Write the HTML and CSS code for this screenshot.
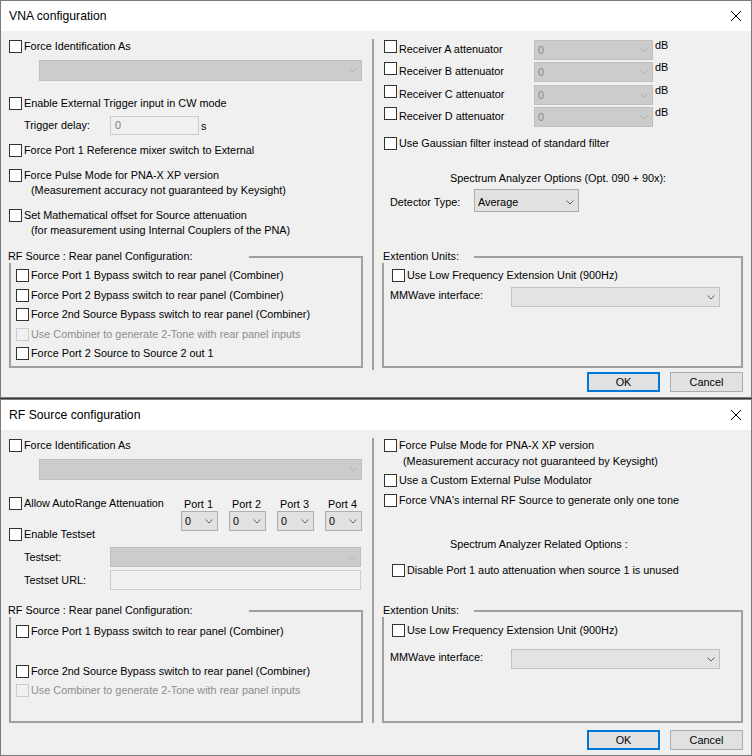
FILE: index.html
```html
<!DOCTYPE html>
<html>
<head>
<meta charset="utf-8">
<title>VNA configuration</title>
<link rel="stylesheet" href="styles.css">
</head>
<body>
<div class="win win1">
  <div class="titlebar">
    <span class="title">VNA configuration</span>
    <svg class="close" width="10" height="10" viewBox="0 0 10 10"><path d="M0 0 L10 10 M10 0 L0 10" stroke="#000" stroke-width="1" fill="none"/></svg>
  </div>
  <div class="wbody">
    <div class="lpanel lp1">
      <div class="cb mt1"><span class="box"></span>Force Identification As</div>
      <div class="combo dis wide mt7"><span class="ctext"></span><svg class="chev" width="8" height="5" viewBox="0 0 8 5"><path d="M0.5 0.5 L4 4 L7.5 0.5" fill="none" stroke="currentColor"/></svg></div>
      <div class="cb mt16"><span class="box"></span>Enable External Trigger input in CW mode</div>
      <div class="frow trig mt6"><span class="flabel">Trigger delay:</span><span class="tbox tdelay">0</span><span class="unit">s</span></div>
      <div class="cb mt9"><span class="box"></span>Force Port 1 Reference mixer switch to External</div>
      <div class="cb mt12"><span class="box"></span>Force Pulse Mode for PNA-X XP version</div>
      <div class="sub">(Measurement accuracy not guaranteed by Keysight)</div>
      <div class="cb mt12"><span class="box"></span>Set Mathematical offset for Source attenuation</div>
      <div class="sub">(for measurement using Internal Couplers of the PNA)</div>
      <div class="group lgroup mt13">
        <div class="ghead"><span class="glabel lglabel">RF Source : Rear panel Configuration:</span><span class="gline"></span></div>
        <div class="gbody lgbody gbh1">
          <div class="cb"><span class="box"></span>Force Port 1 Bypass switch to rear panel (Combiner)</div>
          <div class="cb mt7"><span class="box"></span>Force Port 2 Bypass switch to rear panel (Combiner)</div>
          <div class="cb mt6"><span class="box"></span>Force 2nd Source Bypass switch to rear panel (Combiner)</div>
          <div class="cb dis mt7"><span class="box"></span>Use Combiner to generate 2-Tone with rear panel inputs</div>
          <div class="cb mt6"><span class="box"></span>Force Port 2 Source to Source 2 out 1</div>
        </div>
      </div>
    </div>
    <div class="rcol">
      <div class="recv mt9"><div class="rcb"><span class="box"></span><span class="rtext">Receiver A attenuator</span></div><div class="combo dis rcombo"><span class="ctext">0</span><svg class="chev" width="8" height="5" viewBox="0 0 8 5"><path d="M0.5 0.5 L4 4 L7.5 0.5" fill="none" stroke="currentColor"/></svg></div><span class="db">dB</span></div>
      <div class="recv mt2"><div class="rcb"><span class="box"></span><span class="rtext">Receiver B attenuator</span></div><div class="combo dis rcombo"><span class="ctext">0</span><svg class="chev" width="8" height="5" viewBox="0 0 8 5"><path d="M0.5 0.5 L4 4 L7.5 0.5" fill="none" stroke="currentColor"/></svg></div><span class="db">dB</span></div>
      <div class="recv mt3"><div class="rcb"><span class="box"></span><span class="rtext">Receiver C attenuator</span></div><div class="combo dis rcombo"><span class="ctext">0</span><svg class="chev" width="8" height="5" viewBox="0 0 8 5"><path d="M0.5 0.5 L4 4 L7.5 0.5" fill="none" stroke="currentColor"/></svg></div><span class="db">dB</span></div>
      <div class="recv mt2"><div class="rcb"><span class="box"></span><span class="rtext">Receiver D attenuator</span></div><div class="combo dis rcombo"><span class="ctext">0</span><svg class="chev" width="8" height="5" viewBox="0 0 8 5"><path d="M0.5 0.5 L4 4 L7.5 0.5" fill="none" stroke="currentColor"/></svg></div><span class="db">dB</span></div>
      <div class="cb mt10"><span class="box"></span>Use Gaussian filter instead of standard filter</div>
      <div class="clabel mt22">Spectrum Analyzer Options (Opt. 090 + 90x):</div>
      <div class="det mt4"><span class="dlabel">Detector Type:</span><div class="combo dcombo"><span class="ctext">Average</span><svg class="chev" width="8" height="5" viewBox="0 0 8 5"><path d="M0.5 0.5 L4 4 L7.5 0.5" fill="none" stroke="currentColor"/></svg></div></div>
      <div class="group rgroup mt38">
        <div class="ghead"><span class="glabel rglabel">Extention Units:</span><span class="gline"></span></div>
        <div class="gbody rgbody gbh1">
          <div class="cb"><span class="box"></span>Use Low Frequency Extension Unit (900Hz)</div>
          <div class="mmrow mt5"><span class="mmlabel">MMWave interface:</span><div class="combo mmcombo"><span class="ctext"></span><svg class="chev" width="8" height="5" viewBox="0 0 8 5"><path d="M0.5 0.5 L4 4 L7.5 0.5" fill="none" stroke="currentColor"/></svg></div></div>
        </div>
      </div>
      <div class="buttons mt4"><div class="btn def">OK</div><div class="btn">Cancel</div></div>
    </div>
  </div>
</div>

<div class="win win2">
  <div class="titlebar">
    <span class="title">RF Source configuration</span>
    <svg class="close" width="10" height="10" viewBox="0 0 10 10"><path d="M0 0 L10 10 M10 0 L0 10" stroke="#000" stroke-width="1" fill="none"/></svg>
  </div>
  <div class="wbody">
    <div class="lpanel lp2">
      <div class="cb mt1"><span class="box"></span>Force Identification As</div>
      <div class="combo dis wide mt7"><span class="ctext"></span><svg class="chev" width="8" height="5" viewBox="0 0 8 5"><path d="M0.5 0.5 L4 4 L7.5 0.5" fill="none" stroke="currentColor"/></svg></div>
      <div class="pblock mt17">
        <div class="pleft">
          <div class="cb"><span class="box"></span>Allow AutoRange Attenuation</div>
          <div class="cb mt18"><span class="box"></span>Enable Testset</div>
        </div>
        <div class="ports">
          <div class="port"><span class="plabel">Port 1</span><div class="combo pcombo"><span class="ctext">0</span><svg class="chev" width="8" height="5" viewBox="0 0 8 5"><path d="M0.5 0.5 L4 4 L7.5 0.5" fill="none" stroke="currentColor"/></svg></div></div>
          <div class="port"><span class="plabel">Port 2</span><div class="combo pcombo"><span class="ctext">0</span><svg class="chev" width="8" height="5" viewBox="0 0 8 5"><path d="M0.5 0.5 L4 4 L7.5 0.5" fill="none" stroke="currentColor"/></svg></div></div>
          <div class="port"><span class="plabel">Port 3</span><div class="combo pcombo"><span class="ctext">0</span><svg class="chev" width="8" height="5" viewBox="0 0 8 5"><path d="M0.5 0.5 L4 4 L7.5 0.5" fill="none" stroke="currentColor"/></svg></div></div>
          <div class="port"><span class="plabel">Port 4</span><div class="combo pcombo"><span class="ctext">0</span><svg class="chev" width="8" height="5" viewBox="0 0 8 5"><path d="M0.5 0.5 L4 4 L7.5 0.5" fill="none" stroke="currentColor"/></svg></div></div>
        </div>
      </div>
      <div class="frow mt6"><span class="flabel">Testset:</span><div class="combo dis fcombo"><span class="ctext"></span><svg class="chev" width="8" height="5" viewBox="0 0 8 5"><path d="M0.5 0.5 L4 4 L7.5 0.5" fill="none" stroke="currentColor"/></svg></div></div>
      <div class="frow mt3"><span class="flabel">Testset URL:</span><span class="tbox furl"></span></div>
      <div class="group lgroup mt14">
        <div class="ghead"><span class="glabel lglabel">RF Source : Rear panel Configuration:</span><span class="gline"></span></div>
        <div class="gbody lgbody2 gbh2">
          <div class="cb"><span class="box"></span>Force Port 1 Bypass switch to rear panel (Combiner)</div>
          <div class="cb mt27"><span class="box"></span>Force 2nd Source Bypass switch to rear panel (Combiner)</div>
          <div class="cb dis mt6"><span class="box"></span>Use Combiner to generate 2-Tone with rear panel inputs</div>
        </div>
      </div>
    </div>
    <div class="rcol">
      <div class="cb mt9"><span class="box"></span>Force Pulse Mode for PNA-X XP version</div>
      <div class="sub2 mt3">(Measurement accuracy not guaranteed by Keysight)</div>
      <div class="cb mt6"><span class="box"></span>Use a Custom External Pulse Modulator</div>
      <div class="cb mt7"><span class="box"></span>Force VNA's internal RF Source to generate only one tone</div>
      <div class="clabel mt31">Spectrum Analyzer Related Options :</div>
      <div class="cb indent mt13"><span class="box"></span>Disable Port 1 auto attenuation when source 1 is unused</div>
      <div class="group rgroup mt27">
        <div class="ghead"><span class="glabel rglabel">Extention Units:</span><span class="gline"></span></div>
        <div class="gbody rgbody2 gbh2">
          <div class="cb"><span class="box"></span>Use Low Frequency Extension Unit (900Hz)</div>
          <div class="mmrow mt12"><span class="mmlabel">MMWave interface:</span><div class="combo mmcombo"><span class="ctext"></span><svg class="chev" width="8" height="5" viewBox="0 0 8 5"><path d="M0.5 0.5 L4 4 L7.5 0.5" fill="none" stroke="currentColor"/></svg></div></div>
        </div>
      </div>
      <div class="buttons mt7"><div class="btn def">OK</div><div class="btn">Cancel</div></div>
    </div>
  </div>
</div>
</body>
</html>
```
FILE: styles.css
```css
html, body { margin: 0; padding: 0; }
body {
  width: 752px;
  height: 756px;
  overflow: hidden;
  background: #3a3a3a;
  font-family: "Liberation Sans", Arial, sans-serif;
  font-size: 10.85px;
  color: #000;
}

.win {
  box-sizing: border-box;
  width: 752px;
  border: 1px solid #7a7a7a;
  background: #f0f0f0;
  display: flex;
  flex-direction: column;
}
.win1 { height: 398px; }
.win2 { height: 357px; margin-top: 1px; }

.titlebar {
  flex: none;
  height: 30px;
  background: #fff;
  display: flex;
  align-items: center;
  justify-content: space-between;
}
.title { font-size: 12.2px; line-height: 30px; padding-left: 8px; }
.close { display: block; margin-right: 10px; }

.wbody { flex: 1; display: flex; align-items: flex-start; }

.lpanel {
  flex: none;
  box-sizing: border-box;
  width: 373px;
  margin-top: 8px;
  padding-left: 8px;
  border-right: 2px solid #a0a0a0;
}
.lp1 { height: 331px; }
.lp2 { height: 285px; }

.rcol {
  flex: 1;
  box-sizing: border-box;
  padding-left: 10px;
  padding-right: 8px;
  display: flex;
  flex-direction: column;
  align-items: flex-start;
}

/* spacing */
.mt1 { margin-top: 1px; }
.mt2 { margin-top: 2px; }
.mt3 { margin-top: 3px; }
.mt4 { margin-top: 4px; }
.mt5 { margin-top: 5px; }
.mt6 { margin-top: 6px; }
.mt7 { margin-top: 7px; }
.mt9 { margin-top: 9px; }
.mt10 { margin-top: 10px; }
.mt12 { margin-top: 12px; }
.mt13 { margin-top: 13px; }
.mt14 { margin-top: 14px; }
.mt16 { margin-top: 16px; }
.mt17 { margin-top: 17px; }
.mt18 { margin-top: 18px; }
.mt22 { margin-top: 22px; }
.mt27 { margin-top: 27px; }
.mt31 { margin-top: 31px; }
.mt38 { margin-top: 38px; }

/* checkbox */
.cb {
  display: flex;
  align-items: center;
  height: 13px;
  line-height: 13px;
  white-space: nowrap;
}
.box {
  flex: none;
  box-sizing: border-box;
  width: 13px;
  height: 13px;
  margin-right: 2px;
  border: 1px solid #333;
  background: #fff;
}
.cb.dis { color: #8d8d8d; }
.cb.dis .box { border-color: #cccccc; background: #f0f0f0; }
.indent { margin-left: 8px; }

.sub { margin-left: 22px; margin-top: 2px; line-height: 13px; white-space: nowrap; }
.sub2 { margin-left: 19px; line-height: 13px; white-space: nowrap; }
.clabel { margin-left: 66px; line-height: 13px; white-space: nowrap; }

/* combo boxes */
.combo {
  box-sizing: border-box;
  display: flex;
  align-items: center;
  justify-content: space-between;
  height: 20px;
  padding: 0 4px 0 3px;
  border: 1px solid #adadad;
  background: #e1e1e1;
  color: #000;
}
.combo .chev { display: block; flex: none; color: #606060; }
.combo.dis { background: #cccccc; border-color: #bfbfbf; color: #8a8a8a; }
.combo.dis .chev { color: #b0b0b0; }
.wide { margin-left: 30px; width: 323px; height: 21px; }

/* field rows */
.frow { display: flex; align-items: center; white-space: nowrap; }
.trig { height: 19px; }
.flabel { width: 86px; margin-left: 15px; line-height: 13px; flex: none; }
.tbox {
  box-sizing: border-box;
  display: block;
  border: 1px solid #cccccc;
  background: #f0f0f0;
  color: #7a7a7a;
  padding-left: 4px;
  line-height: 17px;
}
.tdelay { width: 89px; height: 19px; }
.unit { margin-left: 2px; }
.fcombo { width: 251px; }
.furl { width: 251px; height: 20px; }

/* group boxes */
.group { display: flex; flex-direction: column; }
.ghead { display: flex; height: 13px; }
.glabel { flex: none; line-height: 13px; white-space: nowrap; }
.gline {
  flex: 1;
  margin-top: 6px;
  border-top: 2px solid #a0a0a0;
  border-right: 2px solid #a0a0a0;
}
.gbody {
  box-sizing: border-box;
  border: 2px solid #a0a0a0;
  border-top: none;
}
.lgroup { margin-left: -1px; width: 355px; }
.lglabel { width: 241px; }
.lgbody { margin-left: 1px; padding: 6px 0 0 5px; }
.lgbody2 { margin-left: 1px; padding: 8px 0 0 5px; }
.rgroup { margin-left: -2px; width: 361px; }
.rglabel { width: 91px; padding-left: 1px; }
.rgbody { padding: 6px 0 0 8px; }
.rgbody2 { padding: 7px 0 0 8px; }
.gbh1 { height: 105px; }
.gbh2 { height: 106px; }

/* receivers */
.recv { display: flex; align-items: flex-start; height: 20px; white-space: nowrap; }
.rcb { display: flex; align-items: flex-start; width: 150px; flex: none; }
.rtext { line-height: 13px; padding-top: 3px; }
.rcombo { width: 119px; }
.db { margin-left: 2px; margin-top: -1px; line-height: 13px; }

/* detector */
.det { display: flex; align-items: flex-start; height: 23px; white-space: nowrap; }
.dlabel { width: 84px; margin-left: 6px; padding-top: 7px; line-height: 13px; }
.dcombo { width: 105px; height: 23px; padding-top: 3px; }

/* mmwave */
.mmrow { display: flex; align-items: flex-start; margin-left: -2px; white-space: nowrap; }
.mmlabel { width: 121px; padding-top: 2px; line-height: 13px; flex: none; }
.mmcombo { width: 209px; background: #e3e3e3; border-color: #c2c2c2; }

/* ports */
.pblock { display: flex; align-items: flex-start; }
.pleft { width: 172px; flex: none; }
.ports { display: grid; grid-template-columns: repeat(4, 37px); column-gap: 11px; }
.port { display: flex; flex-direction: column; }
.plabel { line-height: 14px; height: 14px; padding-left: 3px; white-space: nowrap; }
.pcombo { width: 37px; }

/* buttons */
.buttons { align-self: flex-end; display: flex; gap: 10px; }
.btn {
  box-sizing: border-box;
  width: 73px;
  height: 20px;
  display: flex;
  align-items: center;
  justify-content: center;
  border: 1px solid #adadad;
  background: #e1e1e1;
}
.btn.def { border: 2px solid #0078d7; }
```
